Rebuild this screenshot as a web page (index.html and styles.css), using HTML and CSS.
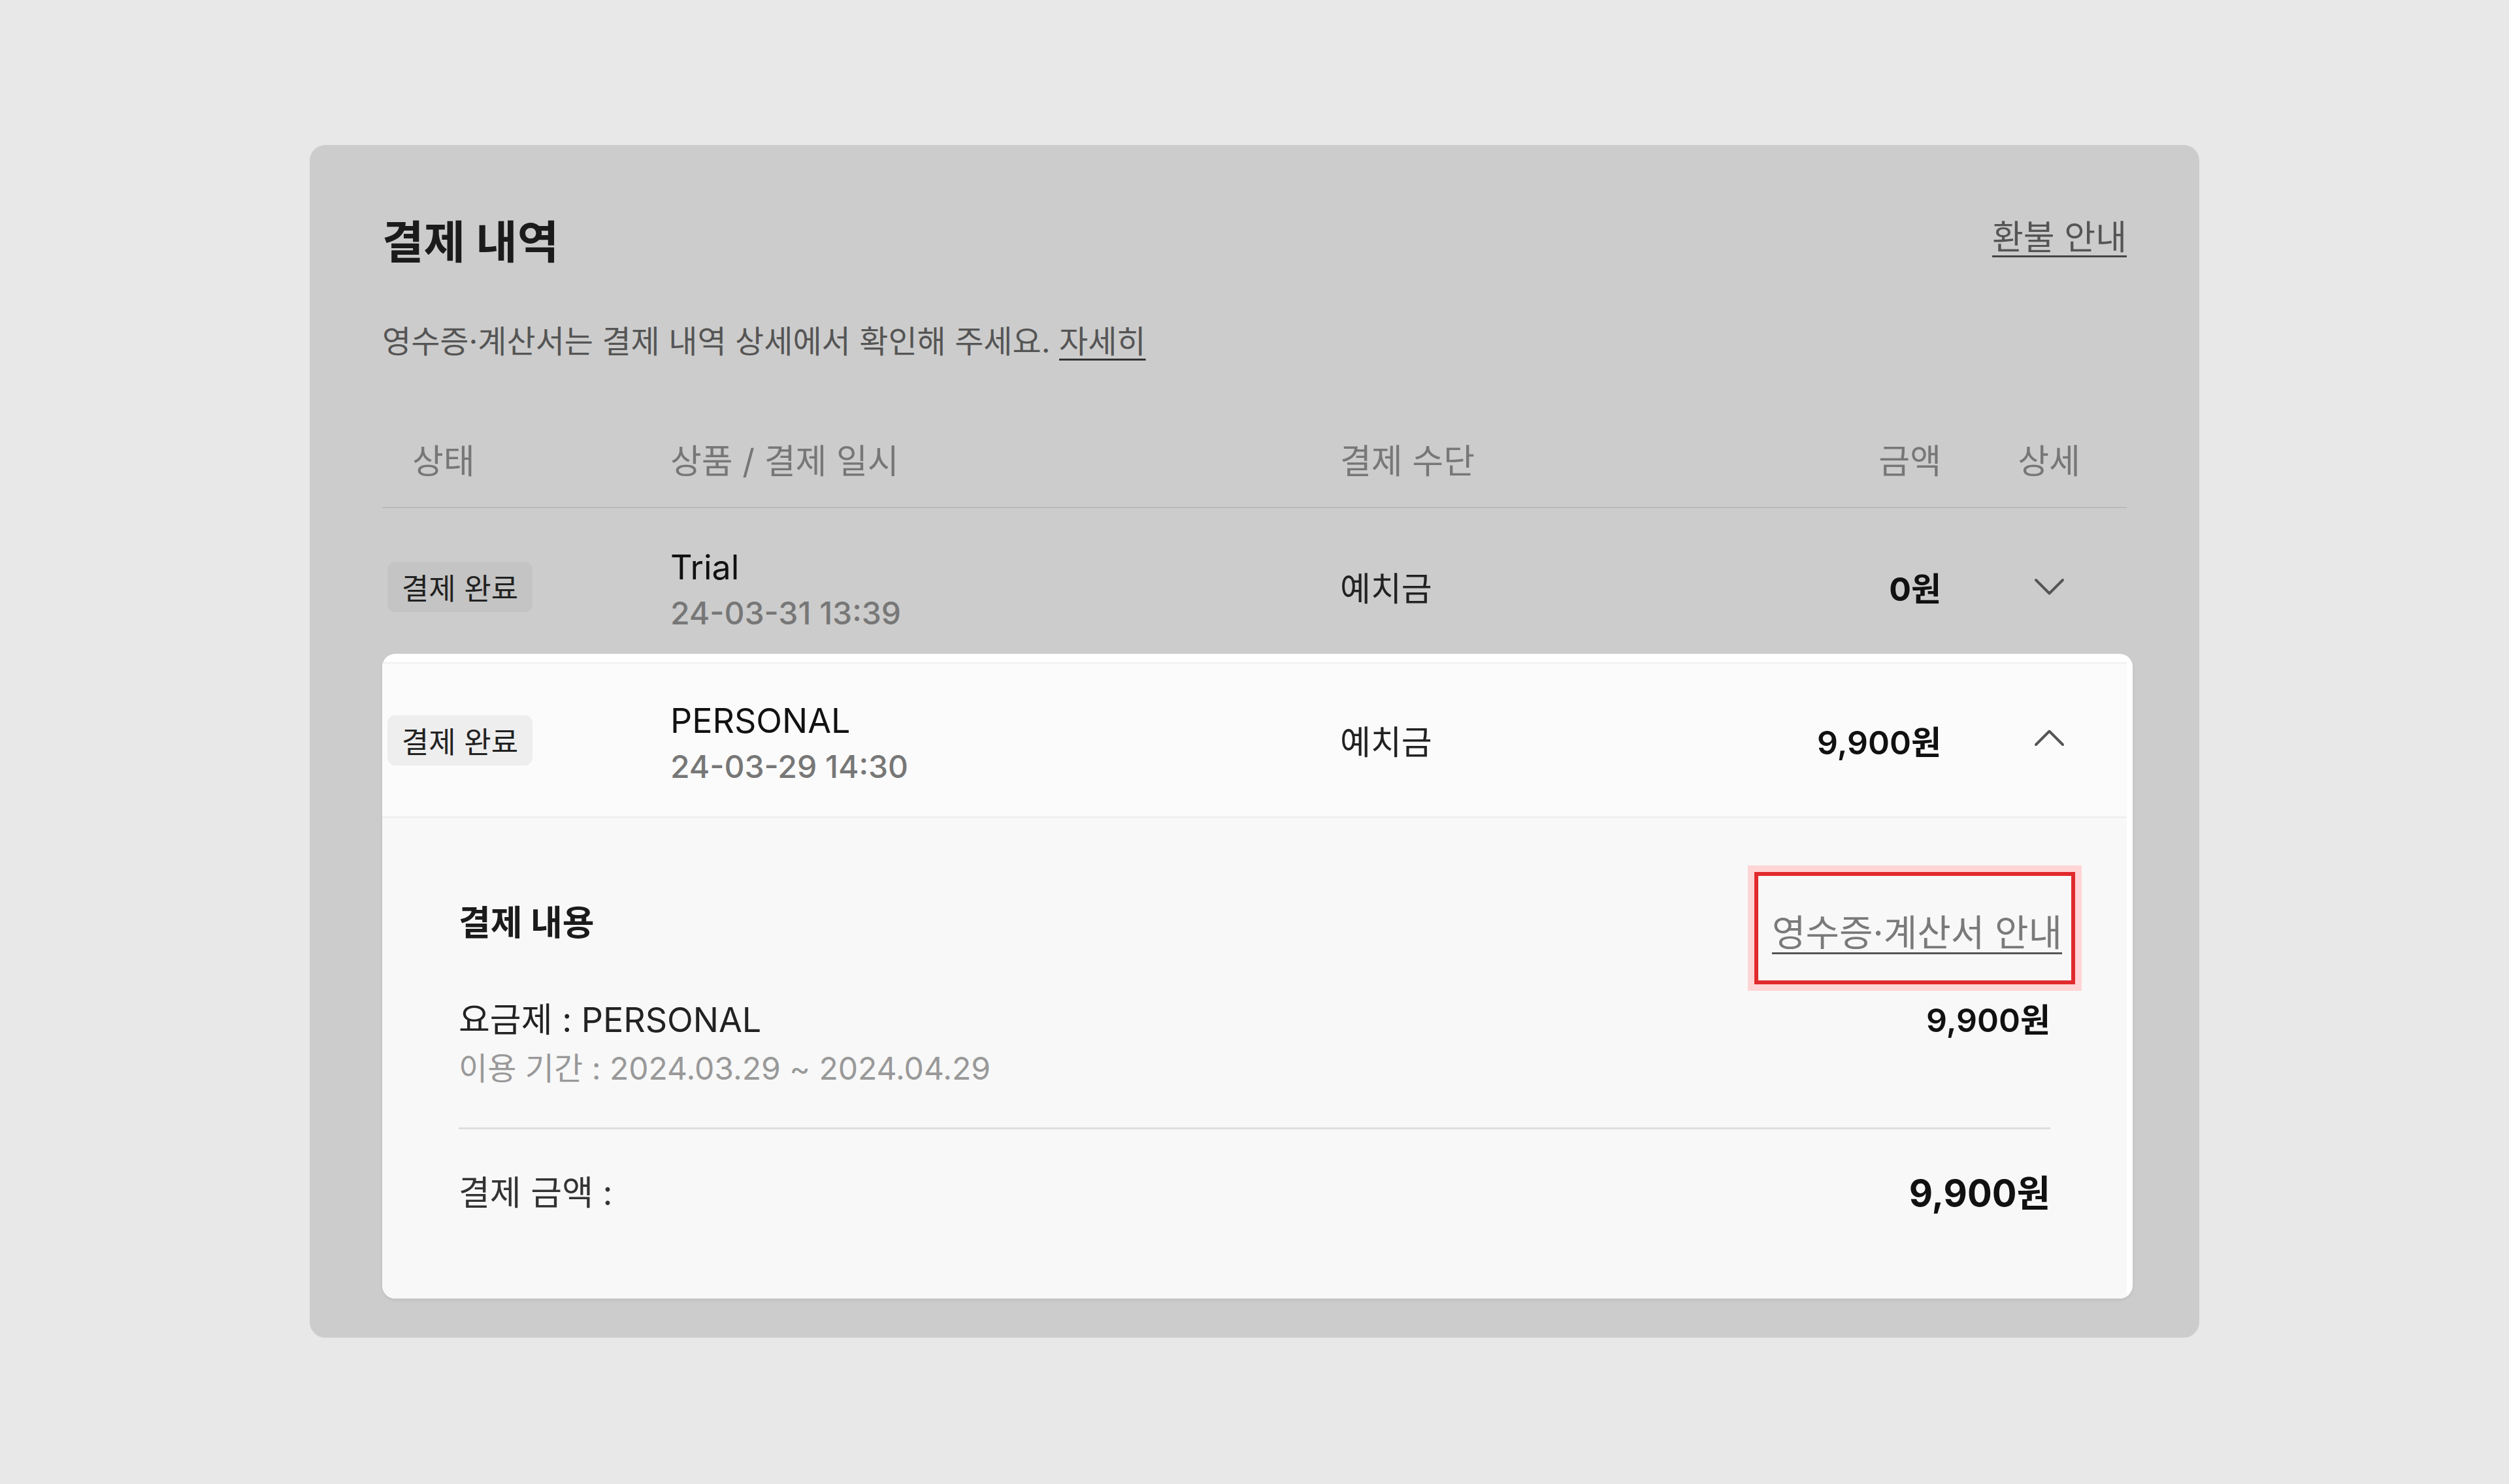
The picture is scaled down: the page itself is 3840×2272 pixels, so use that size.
FILE: index.html
```html
<!DOCTYPE html>
<html lang="ko">
<head>
<meta charset="utf-8">
<title>결제 내역</title>
<link rel="stylesheet" href="styles.css">
</head>
<body>
<main class="panel">
  <header class="head">
    <h1 class="title">결제 내역</h1>
    <a class="refund">환불 안내</a>
  </header>
  <p class="sub">영수증·계산서는 결제 내역 상세에서 확인해 주세요. <a class="more">자세히</a></p>

  <section class="table">
    <div class="thead grid">
      <div class="c-status">상태</div>
      <div class="c-product">상품 / 결제 일시</div>
      <div class="c-method">결제 수단</div>
      <div class="c-amount">금액</div>
      <div class="c-detail">상세</div>
    </div>

    <div class="row grid">
      <div class="c-status"><span class="badge badge-dim">결제 완료</span></div>
      <div class="c-product">
        <div class="pname">Trial</div>
        <div class="pdate">24-03-31 13:39</div>
      </div>
      <div class="c-method">예치금</div>
      <div class="c-amount amt-bold">0원</div>
      <div class="c-detail">
        <svg class="chev" width="45" height="25" viewBox="0 0 45 25"><polyline points="2,2 22.5,22.5 43,2"/></svg>
      </div>
    </div>

    <div class="card">
      <div class="row grid row-open">
        <div class="c-status"><span class="badge badge-light">결제 완료</span></div>
        <div class="c-product">
          <div class="pname">PERSONAL</div>
          <div class="pdate">24-03-29 14:30</div>
        </div>
        <div class="c-method">예치금</div>
        <div class="c-amount amt-semi">9,900원</div>
        <div class="c-detail">
          <svg class="chev chev-up" width="45" height="25" viewBox="0 0 45 25"><polyline points="2,23 22.5,2.5 43,23"/></svg>
        </div>
      </div>

      <div class="detail">
        <div class="dhead">
          <h2 class="dtitle">결제 내용</h2>
          <a class="receipt">영수증·계산서 안내</a>
        </div>
        <div class="item">
          <div class="item-left">
            <div class="plan">요금제 : PERSONAL</div>
            <div class="period">이용 기간 : 2024.03.29 ~ 2024.04.29</div>
          </div>
          <div class="item-price">9,900원</div>
        </div>
        <div class="dline"></div>
        <div class="total">
          <div class="tlabel">결제 금액 :</div>
          <div class="tprice">9,900원</div>
        </div>
      </div>
    </div>
  </section>
</main>
</body>
</html>
```

FILE: styles.css
```css
* { box-sizing: border-box; }

html, body {
  margin: 0;
  padding: 0;
}

body {
  background: #e8e8e8;
  min-height: 2272px;
  font-family: Inter, "Noto Sans CJK KR", sans-serif;
  color: #222;
  padding-top: 222px;
}

h1, h2, p { margin: 0; font-weight: inherit; }
a { color: inherit; text-decoration: none; cursor: pointer; }

.panel {
  width: 2892px;
  margin: 0 auto;
  background: #cccccc;
  border-radius: 24px;
  padding: 104px 111px 60px 111px;
}

.head {
  display: flex;
  justify-content: space-between;
  align-items: flex-start;
}

.title {
  font-size: 69px;
  font-weight: 700;
  line-height: 90px;
  letter-spacing: 0;
  color: #1b1b1b;
}

.refund {
  font-size: 52px;
  line-height: 75px;
  color: #555;
  text-decoration: underline;
  text-decoration-color: #444;
  text-decoration-thickness: 3px;
  text-underline-offset: 9px;
}

.sub {
  margin-top: 72px;
  font-size: 48px;
  line-height: 70px;
  color: #555;
}

.more {
  color: #555;
  text-decoration: underline;
  text-decoration-color: #333;
  text-decoration-thickness: 3px;
  text-underline-offset: 9px;
}

.table { margin-top: 70px; }

.grid {
  display: grid;
  grid-template-columns: 441px 1025px 520px 446px 238px;
  align-items: center;
}

.thead {
  height: 150px;
  border-bottom: 2px solid #b9b9b9;
  font-size: 52px;
  color: #777;
}

.thead .c-status { padding-left: 46px; }

.c-amount {
  text-align: right;
  padding-right: 46px;
}

.c-detail {
  display: flex;
  justify-content: center;
}

.row {
  height: 240px;
  font-size: 51px;
  color: #222;
}

.row .c-status { padding-left: 8px; }

.row .c-product { padding-top: 12px; }

.badge {
  display: inline-flex;
  align-items: center;
  justify-content: center;
  width: 222px;
  height: 77px;
  border-radius: 12px;
  font-size: 45px;
  color: #222;
}

.badge-dim { background: #c4c4c4; }
.badge-light { background: #eeeeee; }

.pname {
  font-size: 52px;
  line-height: 70px;
  color: #111;
}

.pdate {
  font-size: 48px;
  line-height: 70px;
  font-weight: 500;
  color: #777;
}

.amt-bold { font-size: 50px; font-weight: 700; color: #111; }
.amt-semi { font-size: 50px; font-weight: 600; color: #111; }

.chev {
  overflow: visible;
  fill: none;
  stroke: #555;
  stroke-width: 4;
  stroke-linecap: round;
  stroke-linejoin: round;
}

.chev-up { margin-top: -8px; }

.card {
  margin-top: -17px;
  margin-right: -9px;
  padding: 13px 9px 0 0;
  background: #fff;
  border-radius: 20px;
  overflow: hidden;
  box-shadow: 0 3px 5px rgba(0, 0, 0, 0.06);
}

.row-open {
  height: 238px;
  background: #fbfbfb;
  border-top: 2px solid #f0f0f0;
  border-bottom: 2px solid #ececec;
}

.detail {
  background: #f8f8f8;
  padding: 121px 117px 121px 117px;
}

.dhead {
  display: flex;
  justify-content: space-between;
  align-items: flex-start;
}

.dtitle {
  font-size: 53px;
  font-weight: 700;
  line-height: 80px;
  color: #1b1b1b;
}

.receipt {
  position: relative;
  display: block;
  margin-right: -18px;
  font-size: 56px;
  line-height: 110px;
  color: #7a7a7a;
  text-decoration: underline;
  text-decoration-color: #555;
  text-decoration-thickness: 3px;
  text-underline-offset: 10px;
}

.receipt::after {
  content: "";
  position: absolute;
  top: -38px;
  bottom: -24px;
  left: -27px;
  right: -20px;
  border: 6px solid #e12a2c;
  box-shadow: 0 0 0 10px #ffd5d5;
  pointer-events: none;
}

.item {
  display: flex;
  justify-content: space-between;
  align-items: flex-start;
  margin-top: 44px;
}

.plan {
  font-size: 52px;
  line-height: 70px;
  color: #222;
}

.period {
  font-size: 48px;
  line-height: 78px;
  color: #999;
}

.item-price {
  font-size: 50px;
  font-weight: 600;
  line-height: 70px;
  color: #111;
}

.dline {
  margin-top: 51px;
  height: 3px;
  background: #dedede;
}

.total {
  margin-top: 58px;
  display: flex;
  justify-content: space-between;
  align-items: center;
  height: 80px;
}

.tlabel {
  font-size: 52px;
  line-height: 80px;
  color: #333;
}

.tprice {
  font-size: 56px;
  font-weight: 700;
  line-height: 80px;
  color: #111;
}
```
